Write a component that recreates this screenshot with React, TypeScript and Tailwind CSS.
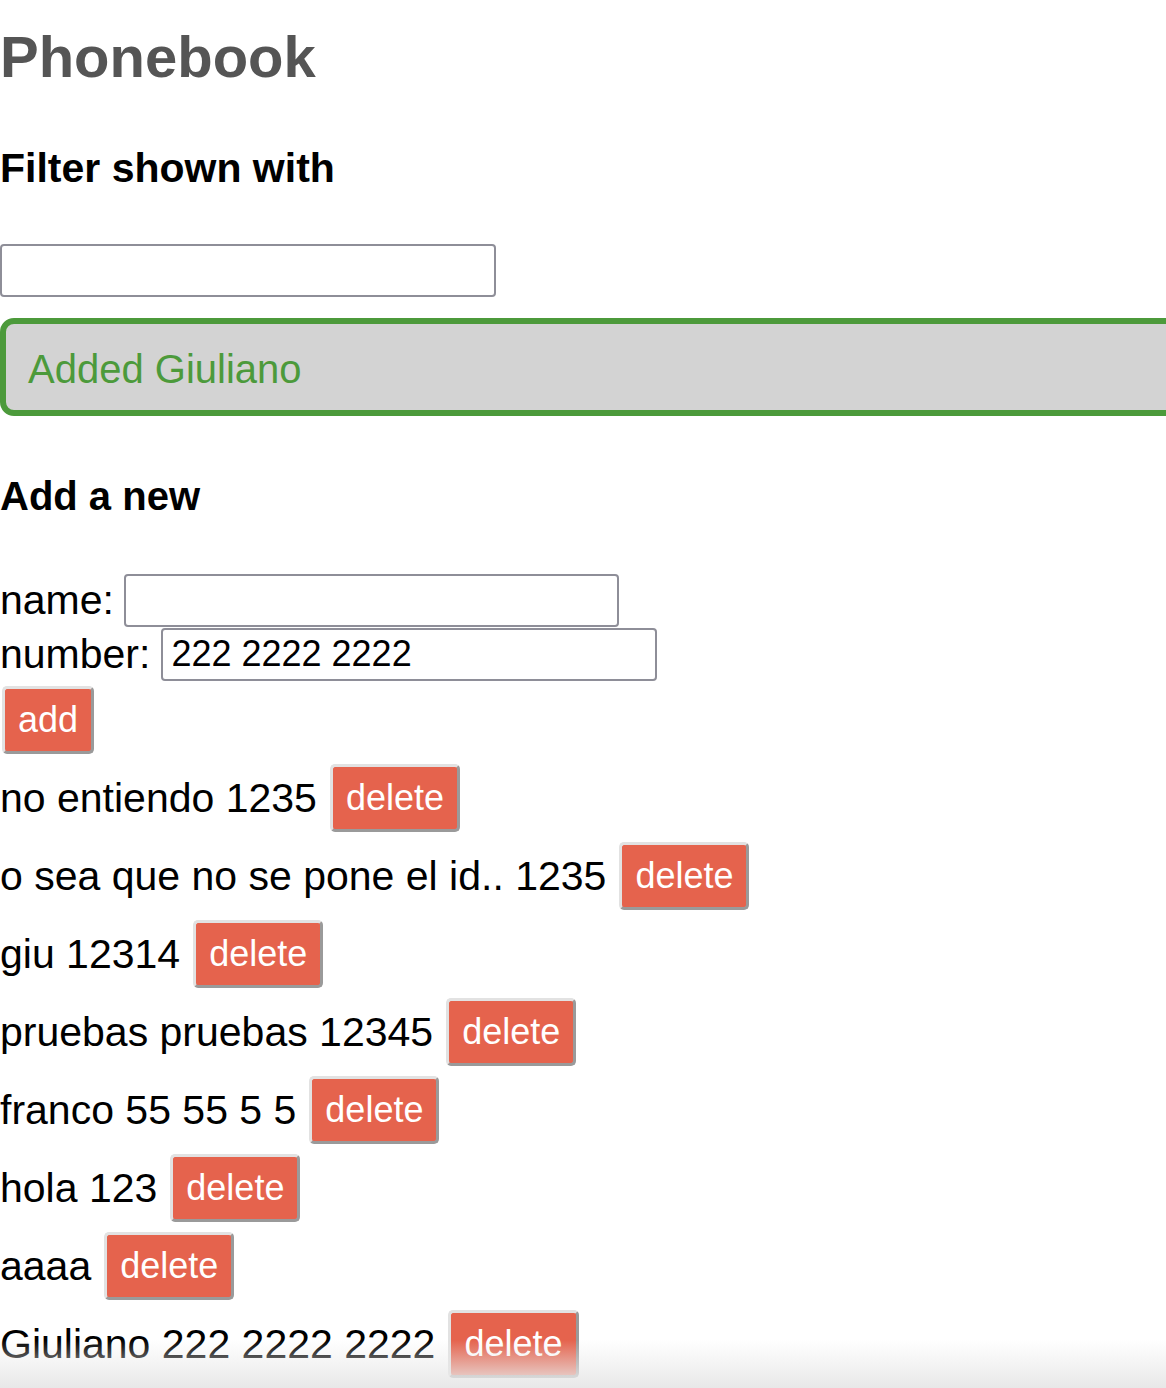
import React from 'react'

const persons = [
    { name: 'no entiendo', number: '1235' },
    { name: 'o sea que no se pone el id..', number: '1235' },
    { name: 'giu', number: '12314' },
    { name: 'pruebas pruebas', number: '12345' },
    { name: 'franco', number: '55 55 5 5' },
    { name: 'hola', number: '123' },
    { name: 'aaaa', number: '' },
    { name: 'Giuliano', number: '222 2222 2222' },
]

const btn =
    'h-[68px] rounded-[5px] border-[3px] border-t-[#e2e2e2] border-l-[#e2e2e2] border-b-[#9a9a9a] border-r-[#9a9a9a] bg-[#e5634d] px-[13px] text-[36px] leading-none text-white'

export default function App() {
    const [newName, setNewName] = React.useState('')
    const [newNumber, setNewNumber] = React.useState('222 2222 2222')
    const [filter, setFilter] = React.useState('')

    return (
        <div className="relative min-h-[1388px] overflow-hidden bg-white font-['Liberation_Sans',Arial,sans-serif] text-black">
            {/* titulo */}
            <h1 className="mt-[23px] h-[68px] text-[58px] font-bold leading-[68px] text-[#555]">Phonebook</h1>

            <h2 className="mt-[53px] h-[48px] text-[41px] font-bold leading-[48px]">Filter shown with</h2>
            <input
                value={filter}
                onChange={(e) => setFilter(e.target.value)}
                className="mt-[52px] block h-[53px] w-[496px] rounded-[4px] border-2 border-[#8e8e98] px-[8px] text-[36px] outline-none"
            />

            {/* notificacion */}
            <div className="mt-[21px] w-[calc(100%+20px)] rounded-[14px] border-[6px] border-[#4c9a3b] bg-[#d3d3d3] pl-[22px] pt-[21px] pb-[17px] text-[40px] leading-[48px] text-[#4c9a3b]">
                Added Giuliano
            </div>

            <h2 className="mt-[56px] h-[48px] text-[40px] font-bold leading-[48px]">Add a new</h2>

            <form className="mt-[53px]" onSubmit={(e) => e.preventDefault()}>
                <div className="flex h-[54px] items-center text-[41px] leading-[48px]">
                    <span>name:</span>
                    <input
                        value={newName}
                        onChange={(e) => setNewName(e.target.value)}
                        className="ml-[10px] h-[53px] w-[495px] rounded-[4px] border-2 border-[#8e8e98] px-[8px] text-[36px] outline-none"
                    />
                </div>
                <div className="flex h-[54px] items-center text-[41px] leading-[48px]">
                    <span>number:</span>
                    <input
                        value={newNumber}
                        onChange={(e) => setNewNumber(e.target.value)}
                        className="ml-[11px] h-[53px] w-[496px] rounded-[4px] border-2 border-[#8e8e98] px-[8px] text-[36px] outline-none"
                    />
                </div>
                <div className="flex h-[78px] items-center pl-[2px]">
                    <button type="submit" className={btn}>add</button>
                </div>
            </form>

            {/* lista */}
            <div>
                {persons.map((p) => (
                    <div key={p.name} className="flex h-[78px] items-center gap-[13px] text-[41px] leading-[48px]">
                        <span>{p.number ? `${p.name} ${p.number}` : p.name}</span>
                        <button className={btn}>delete</button>
                    </div>
                ))}
            </div>

            {/* sombra inferior */}
            <div className="pointer-events-none absolute bottom-0 left-0 h-[48px] w-full bg-gradient-to-b from-transparent to-[#e8e8e8]"></div>
        </div>
    )
}
